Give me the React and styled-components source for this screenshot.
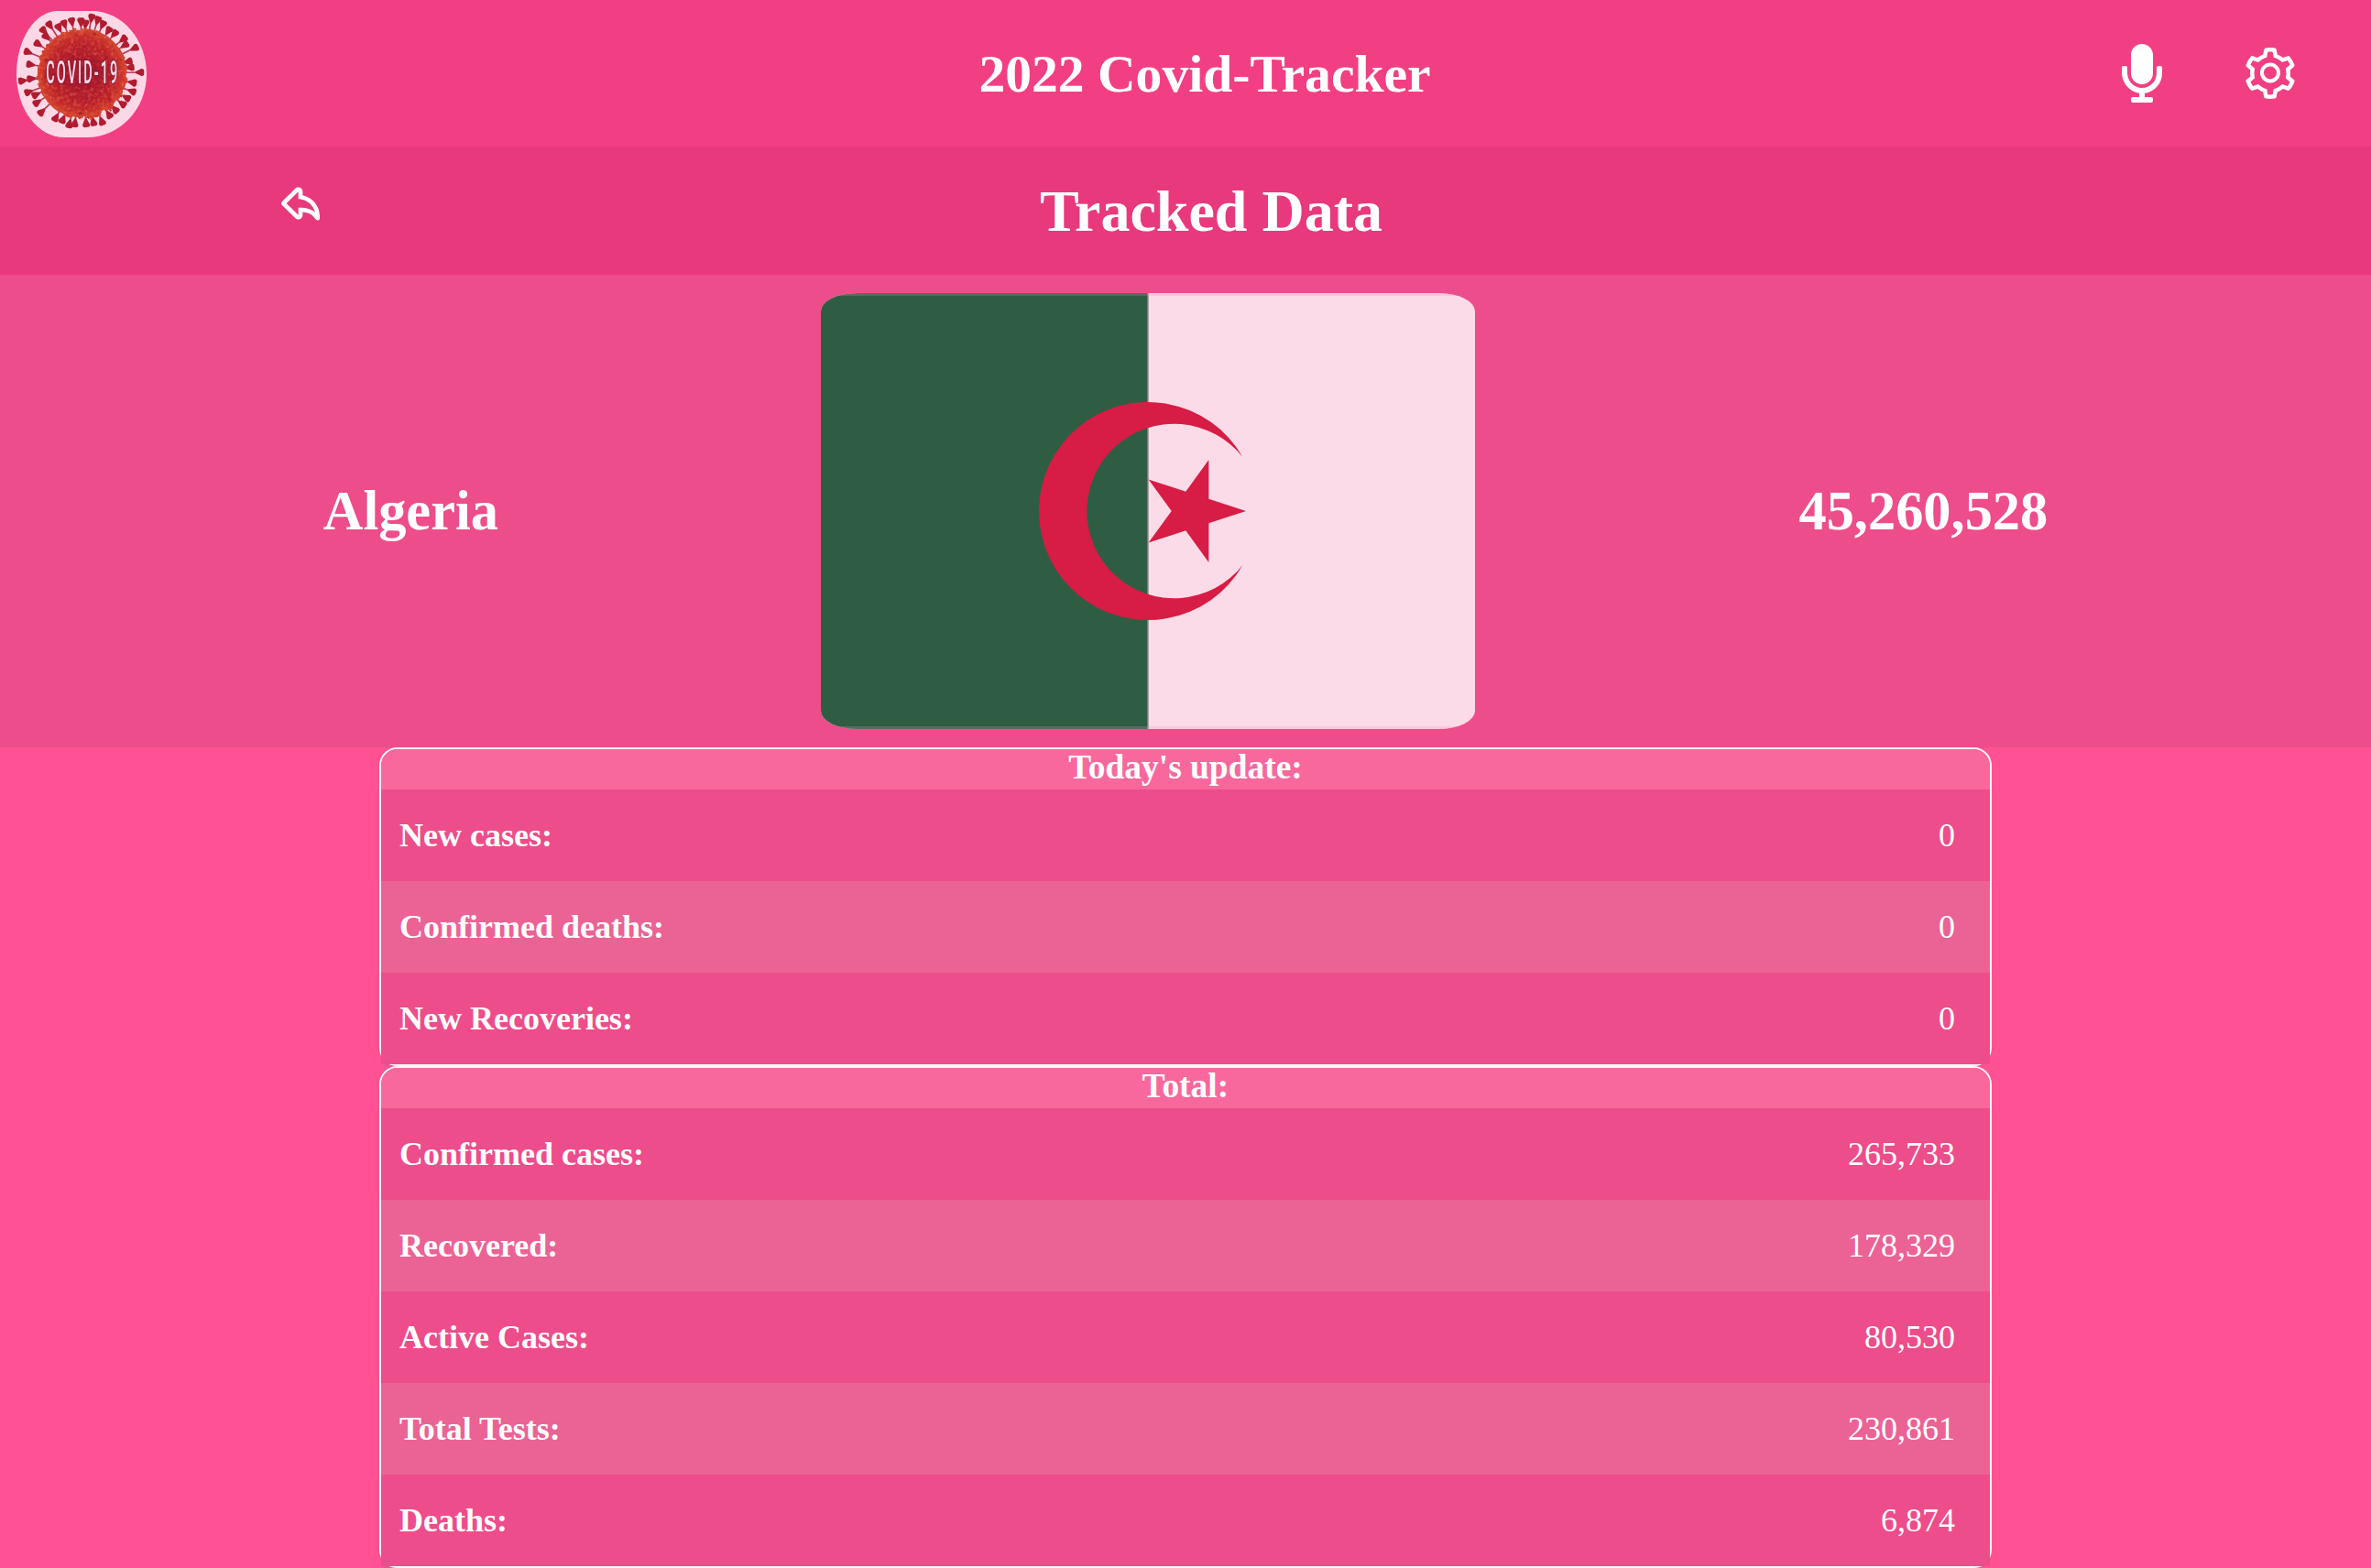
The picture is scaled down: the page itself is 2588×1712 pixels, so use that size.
import React from "react";
import styled, { createGlobalStyle } from "styled-components";
import { FaMicrophone } from "react-icons/fa";
import { AiOutlineSetting } from "react-icons/ai";
import { TiArrowBackOutline } from "react-icons/ti";

const GlobalStyle = createGlobalStyle`
  * { box-sizing: border-box; margin: 0; padding: 0; }
  body {
    background: #ff5193;
    color: #fff;
    font-family: "Liberation Serif", "Times New Roman", serif;
  }
`;

const Header = styled.header`
  display: flex;
  align-items: center;
  justify-content: space-between;
  height: 160px;
  padding: 0 78px 0 18px;
  background: #f23f83;
`;

const Logo = styled.svg`
  display: block;
  width: 142px;
  height: 138px;
  border-radius: 45px 60px 65px 52px / 50%;
  background: #fff;
  opacity: 0.8;
`;

const LogoFrame = styled.div`
  flex: 1;
  display: flex;
  margin-top: 2px;
`;

const AppTitle = styled.h1`
  font-size: 57.6px;
  line-height: 66px;
  padding: 2px 0 0 102px;
`;

const HeaderIcons = styled.div`
  flex: 1;
  display: flex;
  justify-content: flex-end;
  gap: 76px;
  font-size: 64px;

  svg { display: block; }
`;

const SubHeader = styled.div`
  display: grid;
  grid-template-columns: 1fr auto 1fr;
  align-items: center;
  height: 140px;
  padding: 0 0 0 56px;
  background: #e8397d;
`;

const BackButton = styled.a`
  display: flex;
  padding: 0 0 16px 244px;
  font-size: 56px;
  color: #fff;
`;

const PageTitle = styled.h2`
  font-size: 64px;
  line-height: 74px;
  padding-top: 2px;
`;

const Hero = styled.section`
  display: flex;
  align-items: center;
  justify-content: space-evenly;
  height: 516px;
  background: #ed4d8a;
`;

const HeroText = styled.h2`
  font-size: 60.4px;
  line-height: 70px;
`;

const FlagImage = styled.svg`
  display: block;
  width: 714px;
  height: 476px;
  margin: 0 1px 0 -1px;
  border-radius: 40px / 20px;
  opacity: 0.8;
`;

const Panel = styled.section`
  width: 1760px;
  margin: 0 auto;
  border: 2px solid #f5f5f5;
  border-radius: 20px;
`;

const PanelTitle = styled.h3`
  height: 44px;
  border-radius: 18px 18px 0 0;
  background: #f9689c;
  font-size: 37.44px;
  line-height: 40px;
  text-align: center;
`;

const Row = styled.div`
  display: flex;
  align-items: center;
  justify-content: space-between;
  height: 100px;
  padding: 0 38px 0 20px;
  background: ${(p) => (p.$alt ? "#eb6395" : "#ed4d8a")};
  font-size: 36px;
  line-height: 42px;
`;

const Label = styled.span`
  font-weight: 700;
`;

const spikes = [
  [270, 42], [290, 50], [235, 55], [250, 62], [205, 54], [180, 62], [132, 66],
  [162, 74], [112, 84], [120, 104], [93, 128], [60, 155], [68, 196], [42, 250],
  [70, 243], [62, 287], [86, 296], [90, 322], [105, 353], [152, 372],
  [175, 378], [197, 393], [215, 390], [252, 390], [276, 386], [304, 384],
  [328, 362], [348, 345], [372, 326], [386, 306], [404, 285], [406, 256],
  [392, 186], [430, 222], [412, 142], [375, 112], [380, 132], [346, 94],
  [326, 84], [307, 64], [398, 206],
];

const specks = Array.from({ length: 110 }, (_, i) => {
  const angle = i * 2.39996 + Math.sin(i * 12.7) * 0.5;
  const radius = 138 * Math.sqrt((i + 0.5) / 110);
  return [237 + radius * Math.cos(angle), 224 + radius * Math.sin(angle), i];
});

function Spike({ x, y }) {
  const angle = (Math.atan2(y - 224, x - 237) * 180) / Math.PI;
  const length = Math.hypot(x - 237, y - 224) - 132;
  return (
    <g transform={`translate(${x} ${y}) rotate(${angle})`}>
      <path d={`M${-length} 0H0`} stroke="#a8364a" strokeWidth="5" />
      <path d="M-16 -3L3 -12Q11 -13 12 -5V6Q11 13 3 12L-16 3Z" fill="#a2141c" />
    </g>
  );
}

function VirusLogo() {
  return (
    <Logo viewBox="24 21 426 414" preserveAspectRatio="none">
      <defs>
        <radialGradient id="ball">
          <stop offset="0" stopColor="#930c14" />
          <stop offset="0.6" stopColor="#a81414" />
          <stop offset="0.85" stopColor="#bf2c14" />
          <stop offset="1" stopColor="#cc4a1c" />
        </radialGradient>
        <filter id="grain" x="0" y="0" width="1" height="1">
          <feTurbulence type="fractalNoise" baseFrequency="0.09" numOctaves="3" seed="4" />
          <feColorMatrix values="0 0 0 0 0.86  0 0 0 0 0.3  0 0 0 0 0.08  2.8 0 0 0 -1.3" />
          <feComposite in2="SourceGraphic" operator="in" />
        </filter>
        <filter id="rough" x="-0.1" y="-0.1" width="1.2" height="1.2">
          <feTurbulence type="fractalNoise" baseFrequency="0.05" numOctaves="2" seed="9" />
          <feDisplacementMap in="SourceGraphic" scale="20" />
        </filter>
      </defs>
      {spikes.map(([x, y]) => <Spike key={`${x}-${y}`} x={x} y={y} />)}
      <g filter="url(#rough)">
        <circle cx="239" cy="226" r="147" fill="url(#ball)" />
      </g>
      <circle cx="237" cy="224" r="143" filter="url(#grain)" opacity="0.45" />
      {specks.map(([x, y, i]) => (
        <circle
          key={i}
          cx={x}
          cy={y}
          r={i % 4 ? 3 : 6}
          fill={i % 3 ? "#860c16" : "#cf4626"}
          opacity="0.5"
        />
      ))}
      <ellipse cx="237" cy="222" rx="122" ry="46" fill="#8c0e1a" opacity="0.45" />
      <g
        transform="translate(121 259) scale(0.42 1)"
        fontFamily='Roboto, "Liberation Sans", sans-serif'
        fontSize="104"
        fontWeight="500"
      >
        <text
          textLength="556"
          fill="#fff"
          stroke="#6e1020"
          strokeWidth="8"
          paintOrder="stroke"
        >
          COVID-19
        </text>
      </g>
    </Logo>
  );
}

const starPoints = Array.from({ length: 10 }, (_, i) => {
  const radius = i % 2 ? 58.8 * 0.382 : 58.8;
  const angle = (i * Math.PI) / 5;
  return `${(405.2 + radius * Math.cos(angle)).toFixed(2)},${(238 + radius * Math.sin(angle)).toFixed(2)}`;
}).join(" ");

function AlgeriaFlag() {
  return (
    <FlagImage viewBox="0 0 714 476">
      <path fill="#fff" d="M0 0H714V476H0Z" />
      <path fill="#006233" d="M0 0H357V476H0Z" />
      <path fill="#9bb5a6" d="M356.5 0H358V476H356.5Z" />
      <path fill="#f7a0c0" opacity="0.25" d="M0 0H714V3H0ZM0 473H714V476H0Z" />
      <path
        fill="#d21034"
        d="M460.4 179.1A119 119 0 1 0 460.4 296.9A95.2 95.2 0 1 1 460.4 179.1Z"
      />
      <polygon fill="#d21034" points={starPoints} />
    </FlagImage>
  );
}

const panels = [
  {
    title: "Today's update:",
    rows: [["New cases:", "0"], ["Confirmed deaths:", "0"], ["New Recoveries:", "0"]],
  },
  {
    title: "Total:",
    rows: [
      ["Confirmed cases:", "265,733"],
      ["Recovered:", "178,329"],
      ["Active Cases:", "80,530"],
      ["Total Tests:", "230,861"],
      ["Deaths:", "6,874"],
    ],
  },
];

export default function App() {
  return (
    <>
      <GlobalStyle />
      <Header>
        <LogoFrame><VirusLogo /></LogoFrame>
        <AppTitle>2022 Covid-Tracker</AppTitle>
        <HeaderIcons>
          <FaMicrophone />
          <AiOutlineSetting />
        </HeaderIcons>
      </Header>
      <SubHeader>
        <BackButton><TiArrowBackOutline /></BackButton>
        <PageTitle>Tracked Data</PageTitle>
      </SubHeader>
      <Hero>
        <HeroText>Algeria</HeroText>
        <AlgeriaFlag />
        <HeroText>45,260,528</HeroText>
      </Hero>
      {panels.map((panel) => (
        <Panel key={panel.title}>
          <PanelTitle>{panel.title}</PanelTitle>
          {panel.rows.map(([label, value], i) => (
            <Row key={label} $alt={i % 2 === 1}>
              <Label>{label}</Label>
              <span>{value}</span>
            </Row>
          ))}
        </Panel>
      ))}
    </>
  );
}
